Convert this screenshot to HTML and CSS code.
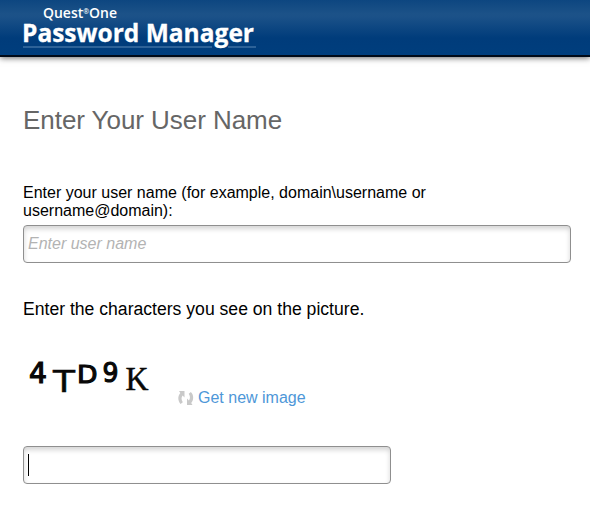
FILE: index.html
```html
<!DOCTYPE html>
<html lang="en">
<head>
<meta charset="utf-8">
<title>Password Manager</title>
<link rel="stylesheet" href="styles.css">
</head>
<body>
<header class="header">
  <svg class="logo" width="240" height="55" viewBox="0 0 240 55" role="img" aria-label="Quest One Password Manager">
    <text class="brand" x="20" y="18.4" textLength="74" lengthAdjust="spacingAndGlyphs">Quest<tspan class="mark" dy="-4">®</tspan><tspan dy="4">One</tspan></text>
    <text class="product" x="-1" y="41.5" textLength="232" lengthAdjust="spacingAndGlyphs">Password Manager</text>
    <path class="rule" d="M0 47H189M205 47H233"/>
  </svg>
</header>
<main class="content">
  <h1 class="title">Enter Your User Name</h1>
  <label class="label" for="user">Enter your user name (for example, domain\username or username@domain):</label>
  <input class="field" id="user" type="text" placeholder="Enter user name">
  <p class="prompt">Enter the characters you see on the picture.</p>
  <div class="captcha">
    <svg class="picture" width="140" height="60" viewBox="0 0 140 60">
      <text class="sans heavy" x="6" y="32.500" font-size="28" textLength="18" lengthAdjust="spacingAndGlyphs">4</text>
      <text class="sans medium" x="30" y="41.500" font-size="31" textLength="22" lengthAdjust="spacingAndGlyphs">T</text>
      <text class="sans heavy" x="54" y="33" font-size="25.500" textLength="20.500" lengthAdjust="spacingAndGlyphs">D</text>
      <text class="sans heavy" x="79.500" y="32" font-size="27" textLength="16" lengthAdjust="spacingAndGlyphs">9</text>
      <text class="serif" x="102.5" y="39.500" font-size="33" textLength="23" lengthAdjust="spacingAndGlyphs">K</text>
    </svg>
    <a class="refresh" href="#">
      <svg class="refresh-icon" width="16" height="16" viewBox="0 0 16 16">
        <path d="M6.500 1H1L2.300 3C-.4 6-.4 11 2.600 14L4.800 12.200C3.200 10 3.100 7.300 4.600 5.500L6.500 7.500Z"/>
        <path d="M9 15H14.500L13.200 13C15.900 10 15.900 5 12.900 2L10.700 3.800C12.300 6 12.400 8.700 10.900 10.500L9 8.500Z"/>
      </svg>
      <span>Get new image</span>
    </a>
  </div>
  <div class="field answer"><span class="caret"></span></div>
</main>
</body>
</html>
```

FILE: styles.css
```css
* { box-sizing: border-box; }
body {
  margin: 0;
  background: #fff;
  color: #000;
  font-family: "Liberation Sans", Arial, sans-serif;
  font-size: 16px;
  line-height: 18px;
}
.header {
  height: 57px;
  padding-left: 23px;
  background: linear-gradient(#0d4680 0, #1c5288 14px, #1b5188 17px, #003c7b 38px, #003e7d 55px);
  border-bottom: 2px solid #000a18;
  box-shadow: 0 1px 6px rgba(0, 0, 0, .6);
}
.logo { display: block; }
.logo text { font-family: "Open Sans", sans-serif; fill: #fff; }
.logo .brand { font-size: 14px; font-weight: 600; }
.logo .mark { font-size: 7px; }
.logo .product { font-size: 25px; font-weight: 700; stroke: #fff; stroke-width: .3; }
.rule { fill: none; stroke: #5a87b3; stroke-width: 1.2; }
.content { display: flex; flex-direction: column; padding: 48px 19px 0 23px; }
.title {
  margin: 0;
  font-size: 26px;
  line-height: 30px;
  font-weight: 400;
  letter-spacing: -.05px;
  color: #666;
}
.label { width: 420px; margin-top: 49px; }
.field {
  width: 548px;
  height: 38px;
  margin-top: 5px;
  padding: 0 4px;
  border: 1px solid #8f8f8f;
  border-radius: 4px;
  outline: none;
  background: #fff;
  box-shadow: inset 0 3px 5px rgba(0, 0, 0, .17);
  font: 16px "Liberation Sans", Arial, sans-serif;
}
.field::placeholder { color: #b3b3b3; font-style: italic; }
.prompt { margin: 36px 0 0; font-size: 17.6px; line-height: 20px; }
.captcha { display: flex; height: 60px; margin-top: 31px; }
.picture { flex: none; }
.picture text { fill: #080808; }
.sans { font-family: "DejaVu Sans", sans-serif; }
.heavy { stroke: #080808; stroke-width: 1.2; }
.medium { stroke: #080808; stroke-width: .5; }
.serif { font-family: "Liberation Serif", serif; stroke: #080808; stroke-width: .5; }
.refresh {
  display: flex;
  align-items: center;
  gap: 4px;
  height: 18px;
  margin: 39px 0 0 15px;
  color: #4e97d8;
  text-decoration: none;
}
.refresh-icon { fill: #c9c9c9; }
.answer { display: flex; align-items: center; width: 368px; margin-top: 36px; }
.caret { width: 1px; height: 22px; background: #000; }
```
